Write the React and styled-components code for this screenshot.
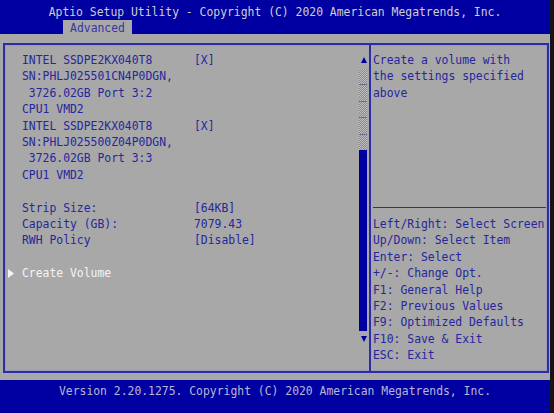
import React from 'react';
import styled, { createGlobalStyle } from 'styled-components';

// Palette
const BLUE = '#0000a2';
const GRAY = '#a8a8a8';
const INK = '#26269e';
const ROW = 16.4;

const GlobalStyle = createGlobalStyle`
  html, body {
    margin: 0;
    padding: 0;
    background: #151515;
  }
  body {
    font-family: "DejaVu Sans Mono", "Liberation Mono", monospace;
    font-size: 11.4px;
  }
`;

const Screen = styled.div`
  width: 550px;
  height: 413px;
  display: flex;
  flex-direction: column;
  background: ${GRAY};
`;

const Header = styled.header`
  height: 34px;
  background: ${BLUE};
  display: flex;
  flex-direction: column;
`;

const Title = styled.div`
  height: 20px;
  line-height: 20px;
  padding-top: 2px;
  box-sizing: border-box;
  text-align: center;
  color: #cfcfcf;
  white-space: pre;
`;

const Tabs = styled.nav`
  display: flex;
  padding-left: 63px;
  margin-top: auto;
`;

const Tab = styled.div`
  width: 69px;
  height: 14px;
  line-height: 16px;
  text-align: center;
  background: ${GRAY};
  color: #3535a6;
`;

const Body = styled.main`
  flex: 1;
  display: flex;
  padding: 9px 1px 7px 3px;
`;

const Frame = styled.section`
  flex: 1;
  display: flex;
  border: 2px solid #2d2da8;
  box-shadow: inset 0 0 0 1px #9a9ab8;
`;

const LeftPane = styled.div`
  flex: 1;
  padding: 7px 0 0 17px;
`;

const Line = styled.div`
  position: relative;
  height: ${ROW}px;
  line-height: ${ROW}px;
  white-space: pre;
  color: ${p => (p.$active ? '#f4f4f4' : INK)};
`;

const Label = styled.span`
  display: inline-block;
  width: 172px;
`;

const Pointer = styled.svg`
  position: absolute;
  left: -14px;
  top: 4px;
`;

const ScrollBar = styled.div`
  width: 7px;
  padding-top: 7px;
  display: grid;
  grid-template-rows: ${ROW}px ${ROW * 5}px ${ROW * 11}px ${ROW}px;
  align-content: start;
`;

const Arrow = styled.svg`
  align-self: center;
  justify-self: center;
  margin-left: 2px;
`;

const Track = styled.div`
  margin-top: 1px;
  background:
    repeating-linear-gradient(to bottom, transparent 0 ${ROW - 1}px, #6d6d8c ${ROW - 1}px ${ROW}px),
    repeating-conic-gradient(#86869c 0 25%, #bebebe 0 50%) 0 0 / 2px 2px;
`;

const Thumb = styled.div`
  background: ${BLUE};
`;

const RightPane = styled.aside`
  box-sizing: border-box;
  width: 178px;
  margin-left: 3px;
  border-left: 2px solid #2d2da8;
  padding: 7px 0 0 2px;
  display: grid;
  grid-template-rows: ${ROW * 9}px ${ROW}px auto;
  color: ${INK};
`;

const HelpText = styled.div`
  line-height: ${ROW}px;
`;

const Rule = styled.hr`
  align-self: center;
  margin: 0 1px 0 0;
  border: 0;
  height: 1px;
  background: #2d2da8;
`;

const Keys = styled.div`
  line-height: ${ROW}px;
  white-space: pre;
`;

const Footer = styled.footer`
  height: 33px;
  background: ${BLUE};
  color: #b8b8d8;
  text-align: center;
  line-height: 20px;
  padding-top: 1px;
  box-sizing: border-box;
  white-space: pre;
`;

const drives = [
  { model: 'INTEL SSDPE2KX040T8', sn: 'SN:PHLJ025501CN4P0DGN,', port: ' 3726.02GB Port 3:2' },
  { model: 'INTEL SSDPE2KX040T8', sn: 'SN:PHLJ025500Z04P0DGN,', port: ' 3726.02GB Port 3:3' },
];

const settings = [
  ['Strip Size:', '[64KB]'],
  ['Capacity (GB):', '7079.43'],
  ['RWH Policy', '[Disable]'],
];

const keys = [
  'Left/Right: Select Screen',
  'Up/Down: Select Item',
  'Enter: Select',
  '+/-: Change Opt.',
  'F1: General Help',
  'F2: Previous Values',
  'F9: Optimized Defaults',
  'F10: Save & Exit',
  'ESC: Exit',
];

const App = () => (
  <>
    <GlobalStyle />
    <Screen>
      <Header>
        <Title>Aptio Setup Utility - Copyright (C) 2020 American Megatrends, Inc.</Title>
        <Tabs>
          <Tab>Advanced</Tab>
        </Tabs>
      </Header>

      <Body>
        <Frame>
          <LeftPane>
            {drives.map(d => (
              <React.Fragment key={d.sn}>
                <Line><Label>{d.model}</Label>[X]</Line>
                <Line>{d.sn}</Line>
                <Line>{d.port}</Line>
                <Line>CPU1 VMD2</Line>
              </React.Fragment>
            ))}
            <Line />
            {settings.map(([k, v]) => (
              <Line key={k}><Label>{k}</Label>{v}</Line>
            ))}
            <Line />
            <Line $active>
              <Pointer width="6" height="9" viewBox="0 0 6 9">
                <path d="M0 0 L6 4.5 L0 9 Z" fill="#f4f4f4" />
              </Pointer>
              Create Volume
            </Line>
          </LeftPane>

          <ScrollBar>
            <Arrow width="6" height="6" viewBox="0 0 6 6">
              <path d="M3 0 L6 6 L0 6 Z" fill={BLUE} />
            </Arrow>
            <Track />
            <Thumb />
            <Arrow width="6" height="6" viewBox="0 0 6 6">
              <path d="M0 0 L6 0 L3 6 Z" fill={BLUE} />
            </Arrow>
          </ScrollBar>

          <RightPane>
            <HelpText>
              Create a volume with<br />the settings specified<br />above
            </HelpText>
            <Rule />
            <Keys>
              {keys.map(k => <div key={k}>{k}</div>)}
            </Keys>
          </RightPane>
        </Frame>
      </Body>

      <Footer>Version 2.20.1275. Copyright (C) 2020 American Megatrends, Inc.</Footer>
    </Screen>
  </>
);

export default App;
